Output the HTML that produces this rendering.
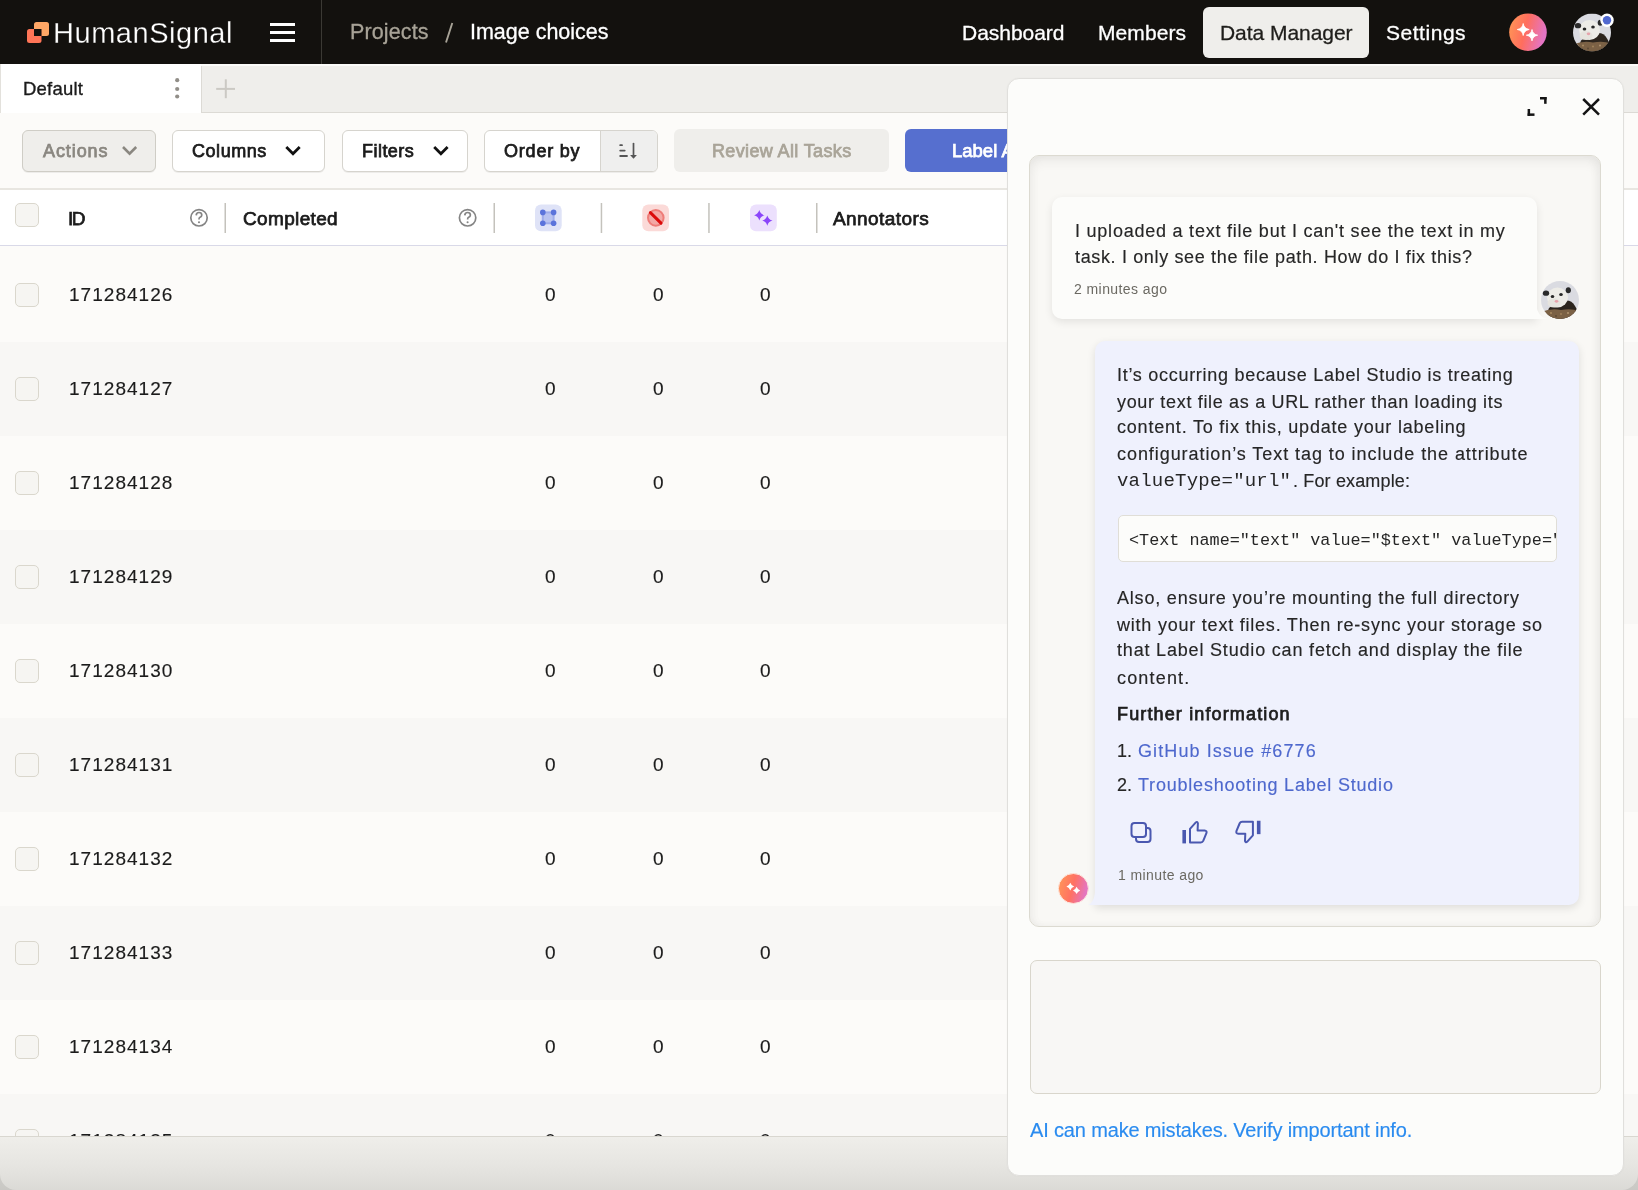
<!DOCTYPE html>
<html><head><meta charset="utf-8">
<style>
*{box-sizing:border-box;margin:0;padding:0}
html,body{width:1638px;height:1190px;overflow:hidden;background:#fcfbf9;font-family:"Liberation Sans",sans-serif}
.a{position:absolute}
.t{position:absolute;white-space:pre;z-index:50;will-change:transform}
</style></head><body>
<!-- header -->
<div class=a style="left:0;top:0;width:1638px;height:64px;background:#13110e"></div>
<svg class=a style="left:0;top:0" width="1638" height="64">
  <rect x="34" y="22" width="15" height="14" rx="2.5" fill="#ffa766"/>
  <rect x="27" y="29" width="14.5" height="14" rx="2.5" fill="#ff7557"/>
  <rect x="34" y="29" width="7.5" height="7" fill="#13110e"/>
  <rect x="270" y="23" width="25" height="3" fill="#fff"/>
  <rect x="270" y="31" width="25" height="3" fill="#fff"/>
  <rect x="270" y="39" width="25" height="3" fill="#fff"/>
  <rect x="321" y="0" width="1" height="64" fill="#3b3934"/>
  <path d="M446 42.5 L452.3 23" stroke="#a8a397" stroke-width="1.9"/>
  <rect x="1203" y="7" width="166" height="51" rx="6" fill="#efeeeb"/>
  <defs><linearGradient id="aig" x1="0" y1="0" x2="1" y2="0.25">
    <stop offset="0" stop-color="#ff9a55"/><stop offset="0.5" stop-color="#ff6e5d"/><stop offset="1" stop-color="#e474c4"/></linearGradient>
  <linearGradient id="aig2" x1="0" y1="0" x2="1" y2="0.25">
    <stop offset="0" stop-color="#ff9a57"/><stop offset="0.55" stop-color="#ff7262"/><stop offset="1" stop-color="#e476c0"/></linearGradient></defs>
  <circle cx="1528" cy="32.2" r="18.8" fill="url(#aig)"/>
  <path d="M1523.2 23.5 Q1524 28.7 1529.2 29.5 Q1524 30.3 1523.2 35.5 Q1522.4 30.3 1517.2 29.5 Q1522.4 28.7 1523.2 23.5 Z" fill="#fff" stroke="#fff" stroke-width="0.8" stroke-linejoin="round"/>
  <path d="M1532 29.5 Q1532.8 34.4 1537.7 35.2 Q1532.8 36 1532 40.9 Q1531.2 36 1526.3 35.2 Q1531.2 34.4 1532 29.5 Z" fill="#fff" stroke="#fff" stroke-width="0.8" stroke-linejoin="round"/>
  <!-- avatar -->
  <clipPath id="avc"><circle cx="1592" cy="32.5" r="19"/></clipPath>
  <g clip-path="url(#avc)"><g transform="translate(1573,13.5)"><rect width="38" height="38" fill="#dadbe1"/>
    <path d="M4 38 L8 27 Q14 22 22 20 Q30 18 34 25 L38 32 L38 38 Z" fill="#2b241d"/>
    <ellipse cx="16.5" cy="16.5" rx="10.5" ry="10" fill="#edece7"/>
    <ellipse cx="13" cy="22" rx="6.5" ry="4.5" fill="#e6e4de"/>
    <ellipse cx="5" cy="12.2" rx="3.2" ry="2.6" fill="#2a2a2a"/>
    <ellipse cx="27.3" cy="9.3" rx="2.6" ry="3" fill="#2a2a2a"/>
    <ellipse cx="11.5" cy="15.5" rx="1.8" ry="1.5" fill="#262626"/>
    <ellipse cx="20" cy="13.6" rx="1.8" ry="1.5" fill="#262626"/>
    <ellipse cx="15.5" cy="20.3" rx="1.8" ry="1.4" fill="#e7a3ab"/>
    <path d="M0 38 L0 31 Q10 27 20 29 Q30 27 38 30 L38 38 Z" fill="#7b6145"/>
    <circle cx="10" cy="32" r="1" fill="#a88b62"/><circle cx="20" cy="33" r="1.1" fill="#9c7f58"/><circle cx="27" cy="32" r="1" fill="#b09470"/><circle cx="15" cy="35" r="1" fill="#5e4a35"/></g></g>
  <circle cx="1607" cy="20.3" r="6.7" fill="#fff"/>
  <circle cx="1607" cy="20.3" r="4.2" fill="#5068d0"/>
</svg>

<!-- tab bar -->
<div class=a style="left:0;top:64px;width:1638px;height:2px;background:#fbfbf9"></div>
<div class=a style="left:201px;top:66px;width:1437px;height:47px;background:#efeeeb;border-bottom:1px solid #dcdad5;border-left:1px solid #dcdad5"></div>
<div class=a style="left:0;top:64px;width:201px;height:49px;background:#fff;border-left:1px solid #e3e1dc"></div>
<svg class=a style="left:0;top:64px" width="260" height="49">
  <circle cx="177.2" cy="16.2" r="2.1" fill="#918e88"/><circle cx="177.2" cy="25" r="2.1" fill="#918e88"/><circle cx="177.2" cy="32.5" r="2.1" fill="#918e88"/>
  <rect x="216.2" y="23.9" width="18.8" height="2" fill="#cbc9c4"/>
  <rect x="224.8" y="15.3" width="2" height="18.9" fill="#cbc9c4"/>
</svg>

<!-- toolbar -->
<div class=a style="left:0;top:113px;width:1638px;height:77px;background:#fcfbf9;border-bottom:2px solid #e8e6e1"></div>
<div class=a style="left:22px;top:129.5px;width:134px;height:42px;background:#efeeeb;border:1px solid #cfcdc6;border-radius:6px;box-shadow:0 1px 0 rgba(0,0,0,0.06)"></div>
<div class=a style="left:172px;top:129.5px;width:153px;height:42px;background:#fff;border:1px solid #d6d4ce;border-radius:6px;box-shadow:0 1px 0 rgba(0,0,0,0.06)"></div>
<div class=a style="left:341.5px;top:129.5px;width:126px;height:42px;background:#fff;border:1px solid #d6d4ce;border-radius:6px;box-shadow:0 1px 0 rgba(0,0,0,0.06)"></div>
<div class=a style="left:484px;top:129.5px;width:174px;height:42px;background:#fff;border:1px solid #d6d4ce;border-radius:6px;overflow:hidden;box-shadow:0 1px 0 rgba(0,0,0,0.06)">
  <div class=a style="left:115px;top:0;width:60px;height:42px;background:#efefee;border-left:1px solid #d6d4ce"></div>
</div>
<div class=a style="left:674px;top:129px;width:215px;height:43px;background:#efeeeb;border-radius:6px"></div>
<div class=a style="left:905px;top:129px;width:200px;height:43px;background:#566fcf;border-radius:6px"></div>
<svg class=a style="left:0;top:113px;z-index:5" width="700" height="77">
  <path d="M123 34 L129.6 40.6 L136.2 34" stroke="#8a8780" stroke-width="2.6" fill="none"/>
  <path d="M286.3 34 L293 40.7 L299.7 34" stroke="#111" stroke-width="2.8" fill="none"/>
  <path d="M434.2 34 L440.9 40.7 L447.6 34" stroke="#111" stroke-width="2.8" fill="none"/>
  <rect x="619.3" y="31.3" width="3.6" height="1.8" rx="0.9" fill="#555"/>
  <rect x="619.3" y="36.7" width="6.3" height="1.8" rx="0.9" fill="#555"/>
  <rect x="619.3" y="42.1" width="8.6" height="1.8" rx="0.9" fill="#555"/>
  <path d="M633.5 30.6 V43" stroke="#555" stroke-width="1.7" stroke-linecap="round"/>
  <path d="M630.1 42 L636.9 42 L633.5 45.8 Z" fill="#555"/>
</svg>

<!-- table header -->
<div class=a style="left:0;top:190px;width:1638px;height:56px;background:#fff;border-bottom:1.5px solid #d9d9e8"></div>
<div class=a style="left:15px;top:203px;width:24px;height:23.5px;background:#f6f5f2;border:1px solid #dad7cd;border-radius:5px"></div>
<svg class=a style="left:0;top:190px" width="1007" height="56">
  <circle cx="199" cy="27.8" r="8.2" stroke="#848484" stroke-width="1.7" fill="none"/>
  <path d="M196.2 25.4 Q196.3 22.5 199 22.5 Q201.8 22.5 201.8 25 Q201.8 26.6 199.7 27.6 Q199 28 199 29.5" stroke="#848484" stroke-width="1.7" fill="none"/>
  <circle cx="199" cy="32.2" r="1.05" fill="#848484"/>
  <circle cx="467.6" cy="27.8" r="8.2" stroke="#848484" stroke-width="1.7" fill="none"/>
  <path d="M464.8 25.4 Q464.9 22.5 467.6 22.5 Q470.4 22.5 470.4 25 Q470.4 26.6 468.3 27.6 Q467.6 28 467.6 29.5" stroke="#848484" stroke-width="1.7" fill="none"/>
  <circle cx="467.6" cy="32.2" r="1.05" fill="#848484"/>
  <rect x="224.5" y="13" width="1.5" height="30" fill="#c4c2bc"/>
  <rect x="493.5" y="13" width="1.5" height="30" fill="#c4c2bc"/>
  <rect x="600.7" y="13" width="1.5" height="30" fill="#c4c2bc"/>
  <rect x="708.2" y="13" width="1.5" height="30" fill="#c4c2bc"/>
  <rect x="816" y="13" width="1.5" height="30" fill="#c4c2bc"/>
  <!-- blue box -->
  <rect x="535" y="14.5" width="26.7" height="26.7" rx="6" fill="#dfe3f7"/>
  <rect x="542.8" y="22.4" width="10.8" height="10.9" fill="#b9c3f0" stroke="#a0adea" stroke-width="2"/>
  <circle cx="542.8" cy="22.4" r="2.8" fill="#5b74db"/><circle cx="553.6" cy="22.4" r="2.8" fill="#5b74db"/>
  <circle cx="542.8" cy="33.3" r="2.8" fill="#5b74db"/><circle cx="553.6" cy="33.3" r="2.8" fill="#5b74db"/>
  <!-- red box -->
  <rect x="642.3" y="14.5" width="26.7" height="26.7" rx="6" fill="#fbdad8"/>
  <circle cx="655.8" cy="27.85" r="7.8" fill="#f3a8a5" stroke="#ee7c78" stroke-width="2"/>
  <path d="M650.4 22.6 L661 33.1" stroke="#db0a0a" stroke-width="3" stroke-linecap="round"/>
  <!-- purple box -->
  <rect x="750" y="14.5" width="26.8" height="26.7" rx="6" fill="#ece0fd"/>
  <path d="M759.3 20.1 Q760.4 24.2 764.5 25.3 Q760.4 26.400000000000002 759.3 30.5 Q758.1999999999999 26.400000000000002 754.0999999999999 25.3 Q758.1999999999999 24.2 759.3 20.1 Z" fill="#8b45fa"/>
  <path d="M767.3 25.400000000000002 Q768.4 29.5 772.5 30.6 Q768.4 31.700000000000003 767.3 35.800000000000004 Q766.1999999999999 31.700000000000003 762.0999999999999 30.6 Q766.1999999999999 29.5 767.3 25.400000000000002 Z" fill="#8b45fa"/>
</svg>

<!-- rows -->
<div class=a style="left:0;top:246px;width:1638px;height:96px;background:#fcfbf9"></div>
<div class=a style="left:15px;top:283.0px;width:24px;height:23.5px;background:#f6f5f2;border:1px solid #dad7cd;border-radius:5px"></div>
<div class=a style="left:0;top:342px;width:1638px;height:94px;background:#f8f7f5"></div>
<div class=a style="left:15px;top:377.0px;width:24px;height:23.5px;background:#f6f5f2;border:1px solid #dad7cd;border-radius:5px"></div>
<div class=a style="left:0;top:436px;width:1638px;height:94px;background:#fcfbf9"></div>
<div class=a style="left:15px;top:471.0px;width:24px;height:23.5px;background:#f6f5f2;border:1px solid #dad7cd;border-radius:5px"></div>
<div class=a style="left:0;top:530px;width:1638px;height:94px;background:#f8f7f5"></div>
<div class=a style="left:15px;top:565.0px;width:24px;height:23.5px;background:#f6f5f2;border:1px solid #dad7cd;border-radius:5px"></div>
<div class=a style="left:0;top:624px;width:1638px;height:94px;background:#fcfbf9"></div>
<div class=a style="left:15px;top:659.0px;width:24px;height:23.5px;background:#f6f5f2;border:1px solid #dad7cd;border-radius:5px"></div>
<div class=a style="left:0;top:718px;width:1638px;height:94px;background:#f8f7f5"></div>
<div class=a style="left:15px;top:753.0px;width:24px;height:23.5px;background:#f6f5f2;border:1px solid #dad7cd;border-radius:5px"></div>
<div class=a style="left:0;top:812px;width:1638px;height:94px;background:#fcfbf9"></div>
<div class=a style="left:15px;top:847.0px;width:24px;height:23.5px;background:#f6f5f2;border:1px solid #dad7cd;border-radius:5px"></div>
<div class=a style="left:0;top:906px;width:1638px;height:94px;background:#f8f7f5"></div>
<div class=a style="left:15px;top:941.0px;width:24px;height:23.5px;background:#f6f5f2;border:1px solid #dad7cd;border-radius:5px"></div>
<div class=a style="left:0;top:1000px;width:1638px;height:94px;background:#fcfbf9"></div>
<div class=a style="left:15px;top:1035.0px;width:24px;height:23.5px;background:#f6f5f2;border:1px solid #dad7cd;border-radius:5px"></div>
<div class=a style="left:0;top:1094px;width:1638px;height:94px;background:#f8f7f5"></div>
<div class=a style="left:15px;top:1129.0px;width:24px;height:23.5px;background:#f6f5f2;border:1px solid #dad7cd;border-radius:5px"></div>

<!-- bottom bar -->
<div class=a style="left:0;top:1136px;width:1638px;height:54px;background:linear-gradient(#dcdbd7,#c9c8c4);z-index:8"></div>
<div class=a style="left:0;top:1136px;width:1638px;height:54px;background:linear-gradient(#efeeea,#e6e5e1 55%,#dbdad6);border-top:1px solid #d9d7d0;border-radius:0 0 16px 16px;z-index:8"></div>

<!-- chat panel -->
<div class=a style="left:1007px;top:78px;width:617px;height:1098px;background:#fcfcfa;border:1.3px solid #e0dfdc;border-radius:12px;box-shadow:0 0 2px rgba(0,0,0,0.04);z-index:10"></div>
<svg class=a style="left:1500px;top:80px;z-index:12" width="120" height="50">
  <rect x="40" y="17" width="6.6" height="2.5" fill="#141414"/><rect x="44.1" y="17" width="2.5" height="6.8" fill="#141414"/>
  <rect x="27.6" y="29" width="2.5" height="6.9" fill="#141414"/><rect x="27.6" y="33.4" width="6.9" height="2.5" fill="#141414"/>
  <path d="M83.2 19 L99 34.6 M99 19 L83.2 34.6" stroke="#141414" stroke-width="2.5"/>
</svg>
<div class=a style="left:1029px;top:155px;width:572px;height:772px;background:#f9f8f5;border:1px solid #dcdad1;border-radius:10px;box-shadow:inset 0 6px 12px rgba(0,0,0,0.055), inset -4px 0 8px rgba(0,0,0,0.03), inset 4px 0 8px rgba(0,0,0,0.02);z-index:11"></div>
<div class=a style="left:1051.5px;top:196.5px;width:485px;height:122.5px;background:#fcfcfa;border-radius:10px 10px 0 10px;box-shadow:0 3px 8px rgba(0,0,0,0.09);z-index:12"></div>
<svg class=a style="left:1541px;top:281px;z-index:13" width="38" height="38">
  <clipPath id="uac"><circle cx="19" cy="19" r="19"/></clipPath>
  <g clip-path="url(#uac)"><rect width="38" height="38" fill="#dadbe1"/>
    <path d="M4 38 L8 27 Q14 22 22 20 Q30 18 34 25 L38 32 L38 38 Z" fill="#2b241d"/>
    <ellipse cx="16.5" cy="16.5" rx="10.5" ry="10" fill="#edece7"/>
    <ellipse cx="13" cy="22" rx="6.5" ry="4.5" fill="#e6e4de"/>
    <ellipse cx="5" cy="12.2" rx="3.2" ry="2.6" fill="#2a2a2a"/>
    <ellipse cx="27.3" cy="9.3" rx="2.6" ry="3" fill="#2a2a2a"/>
    <ellipse cx="11.5" cy="15.5" rx="1.8" ry="1.5" fill="#262626"/>
    <ellipse cx="20" cy="13.6" rx="1.8" ry="1.5" fill="#262626"/>
    <ellipse cx="15.5" cy="20.3" rx="1.8" ry="1.4" fill="#e7a3ab"/>
    <path d="M0 38 L0 31 Q10 27 20 29 Q30 27 38 30 L38 38 Z" fill="#7b6145"/>
    <circle cx="10" cy="32" r="1" fill="#a88b62"/><circle cx="20" cy="33" r="1.1" fill="#9c7f58"/><circle cx="27" cy="32" r="1" fill="#b09470"/><circle cx="15" cy="35" r="1" fill="#5e4a35"/></g>
</svg>
<div class=a style="left:1095px;top:340.5px;width:484px;height:564.5px;background:#eff1fd;border-radius:10px 10px 10px 0;box-shadow:0 3px 8px rgba(0,0,0,0.11);z-index:12"></div>
<div class=a style="left:1117.5px;top:515px;width:439px;height:47px;background:#fcfcfa;border:1px solid #e0ded7;border-radius:5px;z-index:13"></div>
<svg class=a style="left:1055px;top:870px;z-index:13" width="40" height="40">
  <circle cx="18.4" cy="18.5" r="15" fill="url(#aig2)" stroke="#ffe6dc" stroke-width="1"/>
  <path d="M15.3 12.700000000000001 Q16.3 15.600000000000001 19.2 16.6 Q16.3 17.6 15.3 20.5 Q14.3 17.6 11.4 16.6 Q14.3 15.600000000000001 15.3 12.700000000000001 Z" fill="#fff"/>
  <path d="M21.6 16.799999999999997 Q22.55 19.45 25.200000000000003 20.4 Q22.55 21.349999999999998 21.6 24.0 Q20.650000000000002 21.349999999999998 18.0 20.4 Q20.650000000000002 19.45 21.6 16.799999999999997 Z" fill="#fff"/>
</svg>
<svg class=a style="left:1120px;top:815px;z-index:13" width="150" height="35">
  <rect x="11.5" y="8" width="14.5" height="14" rx="3" stroke="#4a58b0" stroke-width="2" fill="none"/>
  <path d="M16 23 V24 Q16 27 19 27 H27.5 Q30.5 27 30.5 24 V16 Q30.5 13 27.5 13 H26.5" stroke="#4a58b0" stroke-width="2" fill="none"/>
  <g id="thu">
  <rect x="62.4" y="15" width="3.6" height="13.4" fill="#4a58b0"/>
  <path d="M70 27.4 V13.8 L75.6 7.6 Q77.3 5.9 77.9 8.2 L77.6 15.4 H84.6 Q87.2 15.6 86.4 18.2 L83.2 25.9 Q82.5 27.4 80.8 27.4 Z" stroke="#4a58b0" stroke-width="2" fill="none" stroke-linejoin="round"/>
  </g>
  <g transform="translate(53.6,-0.55) rotate(180 74.65 17.35)">
  <rect x="62.4" y="15" width="3.6" height="13.4" fill="#4a58b0"/>
  <path d="M70 27.4 V13.8 L75.6 7.6 Q77.3 5.9 77.9 8.2 L77.6 15.4 H84.6 Q87.2 15.6 86.4 18.2 L83.2 25.9 Q82.5 27.4 80.8 27.4 Z" stroke="#4a58b0" stroke-width="2" fill="none" stroke-linejoin="round"/>
  </g>
</svg>
<svg class=a style="left:1080px;top:290px;z-index:12" width="480" height="620">
  <path d="M456 14 Q457.5 27 467 29 L456 29 Z" fill="#fcfcfa"/>
  <path d="M15 603 Q13.5 613 8 615 L15 615 Z" fill="#eff1fd"/>
</svg>
<div class=a style="left:1029.5px;top:960px;width:571.5px;height:134px;background:#f8f7f5;border:1px solid #d9d6cc;border-radius:7px;z-index:11"></div>

<div class=t style="left:53.4px;top:19.45px;font-size:29px;line-height:29px;font-weight:400;-webkit-text-stroke:0.15px #ffffff;color:#ffffff;letter-spacing:0.529px;font-family:'Liberation Sans',sans-serif;-webkit-text-stroke:0.3px #13110e;z-index:5;">HumanSignal</div>
<div class=t style="left:350.0px;top:22.00px;font-size:21.5px;line-height:21.5px;font-weight:400;-webkit-text-stroke:0.15px #a8a397;color:#a8a397;letter-spacing:0.118px;font-family:'Liberation Sans',sans-serif;-webkit-text-stroke:0.3px #a8a397;z-index:5;">Projects</div>
<div class=t style="left:469.5px;top:22.00px;font-size:21.5px;line-height:21.5px;font-weight:400;-webkit-text-stroke:0.15px #ffffff;color:#ffffff;letter-spacing:-0.012px;font-family:'Liberation Sans',sans-serif;-webkit-text-stroke:0.3px #ffffff;z-index:5;">Image choices</div>
<div class=t style="left:962.0px;top:22.42px;font-size:21px;line-height:21px;font-weight:400;-webkit-text-stroke:0.15px #ffffff;color:#ffffff;letter-spacing:-0.029px;font-family:'Liberation Sans',sans-serif;-webkit-text-stroke:0.3px #ffffff;z-index:5;">Dashboard</div>
<div class=t style="left:1098.0px;top:22.42px;font-size:21px;line-height:21px;font-weight:400;-webkit-text-stroke:0.15px #ffffff;color:#ffffff;letter-spacing:0.078px;font-family:'Liberation Sans',sans-serif;-webkit-text-stroke:0.3px #ffffff;z-index:5;">Members</div>
<div class=t style="left:1220.0px;top:22.42px;font-size:21px;line-height:21px;font-weight:400;-webkit-text-stroke:0.15px #1f1e1b;color:#1f1e1b;letter-spacing:-0.043px;font-family:'Liberation Sans',sans-serif;-webkit-text-stroke:0.3px #1f1e1b;z-index:5;">Data Manager</div>
<div class=t style="left:1386.0px;top:22.42px;font-size:21px;line-height:21px;font-weight:400;-webkit-text-stroke:0.15px #ffffff;color:#ffffff;letter-spacing:0.530px;font-family:'Liberation Sans',sans-serif;-webkit-text-stroke:0.3px #ffffff;z-index:5;">Settings</div>
<div class=t style="left:23.0px;top:80.34px;font-size:18.5px;line-height:18.5px;font-weight:400;-webkit-text-stroke:0.15px #1b1b1b;color:#1b1b1b;letter-spacing:0.229px;font-family:'Liberation Sans',sans-serif;-webkit-text-stroke:0.35px #1b1b1b;z-index:5;">Default</div>
<div class=t style="left:42.5px;top:141.86px;font-size:18px;line-height:18px;font-weight:400;-webkit-text-stroke:0.75px #8a8780;color:#8a8780;letter-spacing:0.911px;font-family:'Liberation Sans',sans-serif;z-index:5;">Actions</div>
<div class=t style="left:192.4px;top:141.86px;font-size:18px;line-height:18px;font-weight:400;-webkit-text-stroke:0.75px #1b1b1b;color:#1b1b1b;letter-spacing:0.545px;font-family:'Liberation Sans',sans-serif;z-index:5;">Columns</div>
<div class=t style="left:362.0px;top:141.86px;font-size:18px;line-height:18px;font-weight:400;-webkit-text-stroke:0.75px #1b1b1b;color:#1b1b1b;letter-spacing:0.467px;font-family:'Liberation Sans',sans-serif;z-index:5;">Filters</div>
<div class=t style="left:504.0px;top:141.86px;font-size:18px;line-height:18px;font-weight:400;-webkit-text-stroke:0.75px #1b1b1b;color:#1b1b1b;letter-spacing:0.796px;font-family:'Liberation Sans',sans-serif;z-index:5;">Order by</div>
<div class=t style="left:711.5px;top:141.86px;font-size:18px;line-height:18px;font-weight:400;-webkit-text-stroke:0.75px #a9a498;color:#a9a498;letter-spacing:0.365px;font-family:'Liberation Sans',sans-serif;z-index:5;">Review All Tasks</div>
<div class=t style="left:951.9px;top:142.04px;font-size:18.5px;line-height:18.5px;font-weight:400;-webkit-text-stroke:0.75px #ffffff;color:#ffffff;letter-spacing:0.000px;font-family:'Liberation Sans',sans-serif;z-index:5;">Label All Tasks</div>
<div class=t style="left:68.0px;top:208.92px;font-size:19px;line-height:19px;font-weight:400;-webkit-text-stroke:0.75px #1b1b1b;color:#1b1b1b;letter-spacing:-1.500px;font-family:'Liberation Sans',sans-serif;z-index:5;">ID</div>
<div class=t style="left:242.5px;top:208.92px;font-size:19px;line-height:19px;font-weight:400;-webkit-text-stroke:0.75px #1b1b1b;color:#1b1b1b;letter-spacing:0.351px;font-family:'Liberation Sans',sans-serif;z-index:5;">Completed</div>
<div class=t style="left:833.3px;top:208.82px;font-size:19px;line-height:19px;font-weight:400;-webkit-text-stroke:0.75px #1b1b1b;color:#1b1b1b;letter-spacing:0.422px;font-family:'Liberation Sans',sans-serif;z-index:5;">Annotators</div>
<div class=t style="left:68.8px;top:285.42px;font-size:19px;line-height:19px;font-weight:400;-webkit-text-stroke:0.15px #1b1b1b;color:#1b1b1b;letter-spacing:1.036px;font-family:'Liberation Sans',sans-serif;z-index:5;">171284126</div>
<div class=t style="left:545.3px;top:285.42px;font-size:19px;line-height:19px;font-weight:400;-webkit-text-stroke:0.15px #1b1b1b;color:#1b1b1b;letter-spacing:0.000px;font-family:'Liberation Sans',sans-serif;z-index:5;">0</div>
<div class=t style="left:653.0px;top:285.42px;font-size:19px;line-height:19px;font-weight:400;-webkit-text-stroke:0.15px #1b1b1b;color:#1b1b1b;letter-spacing:0.000px;font-family:'Liberation Sans',sans-serif;z-index:5;">0</div>
<div class=t style="left:760.3px;top:285.42px;font-size:19px;line-height:19px;font-weight:400;-webkit-text-stroke:0.15px #1b1b1b;color:#1b1b1b;letter-spacing:0.000px;font-family:'Liberation Sans',sans-serif;z-index:5;">0</div>
<div class=t style="left:68.8px;top:379.42px;font-size:19px;line-height:19px;font-weight:400;-webkit-text-stroke:0.15px #1b1b1b;color:#1b1b1b;letter-spacing:1.036px;font-family:'Liberation Sans',sans-serif;z-index:5;">171284127</div>
<div class=t style="left:545.3px;top:379.42px;font-size:19px;line-height:19px;font-weight:400;-webkit-text-stroke:0.15px #1b1b1b;color:#1b1b1b;letter-spacing:0.000px;font-family:'Liberation Sans',sans-serif;z-index:5;">0</div>
<div class=t style="left:653.0px;top:379.42px;font-size:19px;line-height:19px;font-weight:400;-webkit-text-stroke:0.15px #1b1b1b;color:#1b1b1b;letter-spacing:0.000px;font-family:'Liberation Sans',sans-serif;z-index:5;">0</div>
<div class=t style="left:760.3px;top:379.42px;font-size:19px;line-height:19px;font-weight:400;-webkit-text-stroke:0.15px #1b1b1b;color:#1b1b1b;letter-spacing:0.000px;font-family:'Liberation Sans',sans-serif;z-index:5;">0</div>
<div class=t style="left:68.8px;top:473.42px;font-size:19px;line-height:19px;font-weight:400;-webkit-text-stroke:0.15px #1b1b1b;color:#1b1b1b;letter-spacing:1.036px;font-family:'Liberation Sans',sans-serif;z-index:5;">171284128</div>
<div class=t style="left:545.3px;top:473.42px;font-size:19px;line-height:19px;font-weight:400;-webkit-text-stroke:0.15px #1b1b1b;color:#1b1b1b;letter-spacing:0.000px;font-family:'Liberation Sans',sans-serif;z-index:5;">0</div>
<div class=t style="left:653.0px;top:473.42px;font-size:19px;line-height:19px;font-weight:400;-webkit-text-stroke:0.15px #1b1b1b;color:#1b1b1b;letter-spacing:0.000px;font-family:'Liberation Sans',sans-serif;z-index:5;">0</div>
<div class=t style="left:760.3px;top:473.42px;font-size:19px;line-height:19px;font-weight:400;-webkit-text-stroke:0.15px #1b1b1b;color:#1b1b1b;letter-spacing:0.000px;font-family:'Liberation Sans',sans-serif;z-index:5;">0</div>
<div class=t style="left:68.8px;top:567.42px;font-size:19px;line-height:19px;font-weight:400;-webkit-text-stroke:0.15px #1b1b1b;color:#1b1b1b;letter-spacing:1.036px;font-family:'Liberation Sans',sans-serif;z-index:5;">171284129</div>
<div class=t style="left:545.3px;top:567.42px;font-size:19px;line-height:19px;font-weight:400;-webkit-text-stroke:0.15px #1b1b1b;color:#1b1b1b;letter-spacing:0.000px;font-family:'Liberation Sans',sans-serif;z-index:5;">0</div>
<div class=t style="left:653.0px;top:567.42px;font-size:19px;line-height:19px;font-weight:400;-webkit-text-stroke:0.15px #1b1b1b;color:#1b1b1b;letter-spacing:0.000px;font-family:'Liberation Sans',sans-serif;z-index:5;">0</div>
<div class=t style="left:760.3px;top:567.42px;font-size:19px;line-height:19px;font-weight:400;-webkit-text-stroke:0.15px #1b1b1b;color:#1b1b1b;letter-spacing:0.000px;font-family:'Liberation Sans',sans-serif;z-index:5;">0</div>
<div class=t style="left:68.8px;top:661.42px;font-size:19px;line-height:19px;font-weight:400;-webkit-text-stroke:0.15px #1b1b1b;color:#1b1b1b;letter-spacing:1.036px;font-family:'Liberation Sans',sans-serif;z-index:5;">171284130</div>
<div class=t style="left:545.3px;top:661.42px;font-size:19px;line-height:19px;font-weight:400;-webkit-text-stroke:0.15px #1b1b1b;color:#1b1b1b;letter-spacing:0.000px;font-family:'Liberation Sans',sans-serif;z-index:5;">0</div>
<div class=t style="left:653.0px;top:661.42px;font-size:19px;line-height:19px;font-weight:400;-webkit-text-stroke:0.15px #1b1b1b;color:#1b1b1b;letter-spacing:0.000px;font-family:'Liberation Sans',sans-serif;z-index:5;">0</div>
<div class=t style="left:760.3px;top:661.42px;font-size:19px;line-height:19px;font-weight:400;-webkit-text-stroke:0.15px #1b1b1b;color:#1b1b1b;letter-spacing:0.000px;font-family:'Liberation Sans',sans-serif;z-index:5;">0</div>
<div class=t style="left:68.8px;top:755.42px;font-size:19px;line-height:19px;font-weight:400;-webkit-text-stroke:0.15px #1b1b1b;color:#1b1b1b;letter-spacing:1.036px;font-family:'Liberation Sans',sans-serif;z-index:5;">171284131</div>
<div class=t style="left:545.3px;top:755.42px;font-size:19px;line-height:19px;font-weight:400;-webkit-text-stroke:0.15px #1b1b1b;color:#1b1b1b;letter-spacing:0.000px;font-family:'Liberation Sans',sans-serif;z-index:5;">0</div>
<div class=t style="left:653.0px;top:755.42px;font-size:19px;line-height:19px;font-weight:400;-webkit-text-stroke:0.15px #1b1b1b;color:#1b1b1b;letter-spacing:0.000px;font-family:'Liberation Sans',sans-serif;z-index:5;">0</div>
<div class=t style="left:760.3px;top:755.42px;font-size:19px;line-height:19px;font-weight:400;-webkit-text-stroke:0.15px #1b1b1b;color:#1b1b1b;letter-spacing:0.000px;font-family:'Liberation Sans',sans-serif;z-index:5;">0</div>
<div class=t style="left:68.8px;top:849.42px;font-size:19px;line-height:19px;font-weight:400;-webkit-text-stroke:0.15px #1b1b1b;color:#1b1b1b;letter-spacing:1.036px;font-family:'Liberation Sans',sans-serif;z-index:5;">171284132</div>
<div class=t style="left:545.3px;top:849.42px;font-size:19px;line-height:19px;font-weight:400;-webkit-text-stroke:0.15px #1b1b1b;color:#1b1b1b;letter-spacing:0.000px;font-family:'Liberation Sans',sans-serif;z-index:5;">0</div>
<div class=t style="left:653.0px;top:849.42px;font-size:19px;line-height:19px;font-weight:400;-webkit-text-stroke:0.15px #1b1b1b;color:#1b1b1b;letter-spacing:0.000px;font-family:'Liberation Sans',sans-serif;z-index:5;">0</div>
<div class=t style="left:760.3px;top:849.42px;font-size:19px;line-height:19px;font-weight:400;-webkit-text-stroke:0.15px #1b1b1b;color:#1b1b1b;letter-spacing:0.000px;font-family:'Liberation Sans',sans-serif;z-index:5;">0</div>
<div class=t style="left:68.8px;top:943.42px;font-size:19px;line-height:19px;font-weight:400;-webkit-text-stroke:0.15px #1b1b1b;color:#1b1b1b;letter-spacing:1.036px;font-family:'Liberation Sans',sans-serif;z-index:5;">171284133</div>
<div class=t style="left:545.3px;top:943.42px;font-size:19px;line-height:19px;font-weight:400;-webkit-text-stroke:0.15px #1b1b1b;color:#1b1b1b;letter-spacing:0.000px;font-family:'Liberation Sans',sans-serif;z-index:5;">0</div>
<div class=t style="left:653.0px;top:943.42px;font-size:19px;line-height:19px;font-weight:400;-webkit-text-stroke:0.15px #1b1b1b;color:#1b1b1b;letter-spacing:0.000px;font-family:'Liberation Sans',sans-serif;z-index:5;">0</div>
<div class=t style="left:760.3px;top:943.42px;font-size:19px;line-height:19px;font-weight:400;-webkit-text-stroke:0.15px #1b1b1b;color:#1b1b1b;letter-spacing:0.000px;font-family:'Liberation Sans',sans-serif;z-index:5;">0</div>
<div class=t style="left:68.8px;top:1037.42px;font-size:19px;line-height:19px;font-weight:400;-webkit-text-stroke:0.15px #1b1b1b;color:#1b1b1b;letter-spacing:1.036px;font-family:'Liberation Sans',sans-serif;z-index:5;">171284134</div>
<div class=t style="left:545.3px;top:1037.42px;font-size:19px;line-height:19px;font-weight:400;-webkit-text-stroke:0.15px #1b1b1b;color:#1b1b1b;letter-spacing:0.000px;font-family:'Liberation Sans',sans-serif;z-index:5;">0</div>
<div class=t style="left:653.0px;top:1037.42px;font-size:19px;line-height:19px;font-weight:400;-webkit-text-stroke:0.15px #1b1b1b;color:#1b1b1b;letter-spacing:0.000px;font-family:'Liberation Sans',sans-serif;z-index:5;">0</div>
<div class=t style="left:760.3px;top:1037.42px;font-size:19px;line-height:19px;font-weight:400;-webkit-text-stroke:0.15px #1b1b1b;color:#1b1b1b;letter-spacing:0.000px;font-family:'Liberation Sans',sans-serif;z-index:5;">0</div>
<div class=t style="left:68.8px;top:1131.42px;font-size:19px;line-height:19px;font-weight:400;-webkit-text-stroke:0.15px #1b1b1b;color:#1b1b1b;letter-spacing:1.036px;font-family:'Liberation Sans',sans-serif;z-index:5;">171284135</div>
<div class=t style="left:545.3px;top:1131.42px;font-size:19px;line-height:19px;font-weight:400;-webkit-text-stroke:0.15px #1b1b1b;color:#1b1b1b;letter-spacing:0.000px;font-family:'Liberation Sans',sans-serif;z-index:5;">0</div>
<div class=t style="left:653.0px;top:1131.42px;font-size:19px;line-height:19px;font-weight:400;-webkit-text-stroke:0.15px #1b1b1b;color:#1b1b1b;letter-spacing:0.000px;font-family:'Liberation Sans',sans-serif;z-index:5;">0</div>
<div class=t style="left:760.3px;top:1131.42px;font-size:19px;line-height:19px;font-weight:400;-webkit-text-stroke:0.15px #1b1b1b;color:#1b1b1b;letter-spacing:0.000px;font-family:'Liberation Sans',sans-serif;z-index:5;">0</div>
<div class=t style="left:1074.6px;top:221.86px;font-size:18px;line-height:18px;font-weight:400;-webkit-text-stroke:0.15px #262626;color:#262626;letter-spacing:0.772px;font-family:'Liberation Sans',sans-serif;z-index:20;">I uploaded a text file but I can&#x27;t see the text in my</div>
<div class=t style="left:1074.6px;top:247.76px;font-size:18px;line-height:18px;font-weight:400;-webkit-text-stroke:0.15px #262626;color:#262626;letter-spacing:0.649px;font-family:'Liberation Sans',sans-serif;z-index:20;">task. I only see the file path. How do I fix this?</div>
<div class=t style="left:1074.0px;top:282.15px;font-size:14px;line-height:14px;font-weight:400;color:#6b6962;letter-spacing:0.421px;font-family:'Liberation Sans',sans-serif;z-index:20;">2 minutes ago</div>
<div class=t style="left:1117.0px;top:366.46px;font-size:18px;line-height:18px;font-weight:400;-webkit-text-stroke:0.15px #262626;color:#262626;letter-spacing:0.715px;font-family:'Liberation Sans',sans-serif;z-index:20;">It’s occurring because Label Studio is treating</div>
<div class=t style="left:1117.0px;top:392.56px;font-size:18px;line-height:18px;font-weight:400;-webkit-text-stroke:0.15px #262626;color:#262626;letter-spacing:0.671px;font-family:'Liberation Sans',sans-serif;z-index:20;">your text file as a URL rather than loading its</div>
<div class=t style="left:1117.0px;top:418.36px;font-size:18px;line-height:18px;font-weight:400;-webkit-text-stroke:0.15px #262626;color:#262626;letter-spacing:0.798px;font-family:'Liberation Sans',sans-serif;z-index:20;">content. To fix this, update your labeling</div>
<div class=t style="left:1117.0px;top:445.06px;font-size:18px;line-height:18px;font-weight:400;-webkit-text-stroke:0.15px #262626;color:#262626;letter-spacing:0.934px;font-family:'Liberation Sans',sans-serif;z-index:20;">configuration’s Text tag to include the attribute</div>
<div class=t style="left:1117.0px;top:472.44px;font-size:19px;line-height:19px;font-weight:400;color:#262626;letter-spacing:0.212px;font-family:'Liberation Mono',monospace;z-index:20;">valueType=&quot;url&quot;</div>
<div class=t style="left:1293.0px;top:471.76px;font-size:18px;line-height:18px;font-weight:400;-webkit-text-stroke:0.15px #262626;color:#262626;letter-spacing:0.150px;font-family:'Liberation Sans',sans-serif;z-index:20;">. For example:</div>
<div class=t style="left:1128.7px;top:532.52px;font-size:16.8px;line-height:16.8px;font-weight:400;color:#262626;letter-spacing:0.000px;font-family:'Liberation Mono',monospace;width:427px;overflow:hidden;z-index:20;">&lt;Text name=&quot;text&quot; value=&quot;$text&quot; valueType=&quot;url&quot;/&gt;</div>
<div class=t style="left:1117.0px;top:589.46px;font-size:18px;line-height:18px;font-weight:400;-webkit-text-stroke:0.15px #262626;color:#262626;letter-spacing:0.800px;font-family:'Liberation Sans',sans-serif;z-index:20;">Also, ensure you’re mounting the full directory</div>
<div class=t style="left:1117.0px;top:615.86px;font-size:18px;line-height:18px;font-weight:400;-webkit-text-stroke:0.15px #262626;color:#262626;letter-spacing:0.779px;font-family:'Liberation Sans',sans-serif;z-index:20;">with your text files. Then re-sync your storage so</div>
<div class=t style="left:1117.0px;top:641.46px;font-size:18px;line-height:18px;font-weight:400;-webkit-text-stroke:0.15px #262626;color:#262626;letter-spacing:0.816px;font-family:'Liberation Sans',sans-serif;z-index:20;">that Label Studio can fetch and display the file</div>
<div class=t style="left:1117.0px;top:668.66px;font-size:18px;line-height:18px;font-weight:400;-webkit-text-stroke:0.15px #262626;color:#262626;letter-spacing:1.179px;font-family:'Liberation Sans',sans-serif;z-index:20;">content.</div>
<div class=t style="left:1117.0px;top:705.16px;font-size:18px;line-height:18px;font-weight:400;-webkit-text-stroke:0.75px #1f1f1f;color:#1f1f1f;letter-spacing:1.141px;font-family:'Liberation Sans',sans-serif;z-index:20;">Further information</div>
<div class=t style="left:1117.0px;top:741.66px;font-size:18px;line-height:18px;font-weight:400;-webkit-text-stroke:0.15px #262626;color:#262626;letter-spacing:0.000px;font-family:'Liberation Sans',sans-serif;z-index:20;">1.</div>
<div class=t style="left:1138.0px;top:741.66px;font-size:18px;line-height:18px;font-weight:400;-webkit-text-stroke:0.15px #4e68cd;color:#4e68cd;letter-spacing:1.094px;font-family:'Liberation Sans',sans-serif;z-index:20;">GitHub Issue #6776</div>
<div class=t style="left:1117.0px;top:775.96px;font-size:18px;line-height:18px;font-weight:400;-webkit-text-stroke:0.15px #262626;color:#262626;letter-spacing:0.000px;font-family:'Liberation Sans',sans-serif;z-index:20;">2.</div>
<div class=t style="left:1138.0px;top:775.96px;font-size:18px;line-height:18px;font-weight:400;-webkit-text-stroke:0.15px #4e68cd;color:#4e68cd;letter-spacing:0.793px;font-family:'Liberation Sans',sans-serif;z-index:20;">Troubleshooting Label Studio</div>
<div class=t style="left:1117.8px;top:868.05px;font-size:14px;line-height:14px;font-weight:400;color:#6b6962;letter-spacing:0.404px;font-family:'Liberation Sans',sans-serif;z-index:20;">1 minute ago</div>
<div class=t style="left:1029.5px;top:1119.77px;font-size:20px;line-height:20px;font-weight:400;-webkit-text-stroke:0.15px #2a8bef;color:#2a8bef;letter-spacing:-0.157px;font-family:'Liberation Sans',sans-serif;z-index:20;">AI can make mistakes. Verify important info.</div>
</body></html>
